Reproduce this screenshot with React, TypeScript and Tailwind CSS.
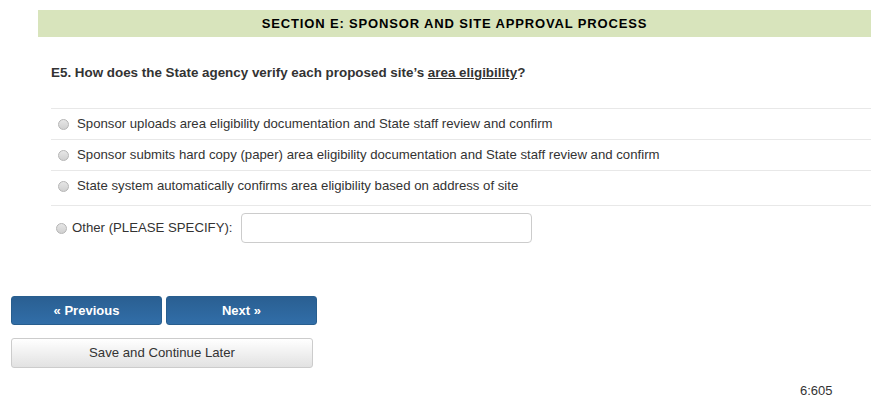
import React from "react";

const Radio = () => (
  <span className="inline-block w-[11px] h-[11px] rounded-full border border-[#b5b5b5] bg-gradient-to-b from-[#e6e6e6] to-[#d0d0d0] shrink-0" />
);

const options = [
  "Sponsor uploads area eligibility documentation and State staff review and confirm",
  "Sponsor submits hard copy (paper) area eligibility documentation and State staff review and confirm",
  "State system automatically confirms area eligibility based on address of site",
];

export default function App() {
  return (
    <div className="w-[882px] h-[401px] bg-white text-[#333] relative" style={{ fontFamily: '"Liberation Sans", Arial, sans-serif' }}>
      <div className="pt-[10px] pl-[38px] pr-[11px]">
        <div className="h-[27px] bg-[#d8e4bc] flex items-center justify-center text-[13px] font-bold tracking-[0.85px] text-black">
          SECTION E: SPONSOR AND SITE APPROVAL PROCESS
        </div>
      </div>
      <div className="pl-[51px] pr-[11px]">
        <div className="mt-[27px] text-[13.4px] font-bold text-[#333] leading-[18px]">
          E5. How does the State agency verify each proposed site’s <span className="underline">area eligibility</span>?
        </div>
        <div className="mt-[26px]">
          {options.map((o, i) => (
            <div
              key={o}
              className={
                "flex items-center border-t border-[#e8e8e8] pl-[7px] gap-[8px] text-[13.2px] text-[#333] " +
                (i === 2 ? "h-[35px] pb-[4px]" : "h-[31px]")
              }
            >
              <Radio />
              <span>{o}</span>
            </div>
          ))}
          <div className="flex items-center border-t border-[#e8e8e8] pl-[5px] pt-[7px] gap-[5px] text-[13.2px] text-[#333]">
            <Radio />
            <span>Other (PLEASE SPECIFY):</span>
            <div className="ml-[3px] w-[291px] h-[30px] border border-[#cccccc] rounded-[4px] bg-white" />
          </div>
        </div>
      </div>
      <div className="pl-[11px] mt-[53px] flex gap-[4px]">
        <div className="w-[151px] h-[29px] rounded-[3px] bg-gradient-to-b from-[#2a5f92] to-[#316ea8] border border-[#285e8e] text-white text-[13px] font-bold flex items-center justify-center">
          « Previous
        </div>
        <div className="w-[151px] h-[29px] rounded-[3px] bg-gradient-to-b from-[#2a5f92] to-[#316ea8] border border-[#285e8e] text-white text-[13px] font-bold flex items-center justify-center">
          Next »
        </div>
      </div>
      <div className="pl-[11px] mt-[13px]">
        <div className="w-[302px] h-[30px] rounded-[3px] bg-gradient-to-b from-white to-[#e2e2e2] border border-[#cccccc] text-[#333] text-[13.2px] flex items-center justify-center">
          Save and Continue Later
        </div>
      </div>
      <div className="absolute left-[800px] top-[381px] text-[13px] text-[#333]">6:605</div>
    </div>
  );
}
